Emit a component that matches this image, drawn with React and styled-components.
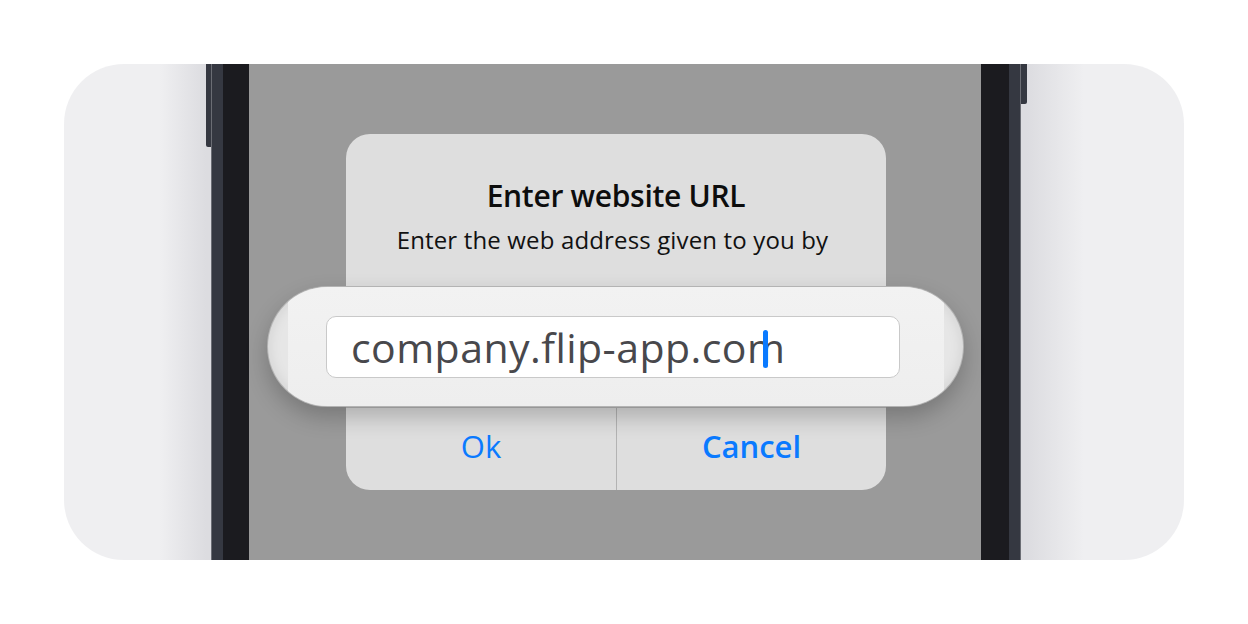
import React from 'react';
import styled, { createGlobalStyle } from 'styled-components';

const Global = createGlobalStyle`
  html, body { margin: 0; padding: 0; background: #ffffff; }
  body { font-family: "Open Sans", "Noto Sans", sans-serif; }
  * { box-sizing: border-box; }
`;

const Page = styled.div`
  width: 1248px;
  height: 624px;
  padding: 64px;
  background: #ffffff;
`;

const Card = styled.div`
  height: 496px;
  border-radius: 60px;
  overflow: hidden;
  display: flex;
  padding-left: 147px;
  background: linear-gradient(
    to right,
    #efeff1 0px,
    #efeff1 96px,
    #dcdce0 142px,
    #dcdce0 963px,
    #efeff1 1020px,
    #efeff1 100%
  );
`;

const PhoneShell = styled.div`
  position: relative;
  width: 810px;
  height: 100%;
  background: #353841;
  padding: 0 12px;
  display: flex;
  box-shadow: inset 1px 0 0 #6b6d74, inset -1px 0 0 #6b6d74;
`;

const SideButton = styled.div`
  position: absolute;
  top: 0;
  ${(p) => (p.$side === 'left' ? 'left: -5px;' : 'right: -6px;')}
  width: ${(p) => (p.$side === 'left' ? 5 : 6)}px;
  height: ${(p) => p.$h}px;
  background: #353841;
  border-radius: ${(p) => (p.$side === 'left' ? '0 0 0 2px' : '0 0 2px 0')};
`;

const Bezel = styled.div`
  flex: 1;
  display: flex;
  background: #1b1b1f;
  padding: 0 28px 0 26px;
`;

const Screen = styled.div`
  position: relative;
  flex: 1;
  background: #9a9a9a;
  display: flex;
  justify-content: center;
  align-items: flex-start;
  padding: 70px 0 0 2px;
`;

const Dialog = styled.div`
  width: 540px;
  height: 356px;
  background: #dedede;
  border-radius: 24px;
  overflow: hidden;
  display: flex;
  flex-direction: column;
`;

const DialogBody = styled.div`
  flex: 1;
  display: flex;
  flex-direction: column;
  align-items: center;
  padding-top: 44px;
`;

const Title = styled.div`
  font-size: 30px;
  line-height: 36px;
  font-weight: 600;
  color: #0d0d0d;
  letter-spacing: -0.3px;
`;

const Subtitle = styled.div`
  margin-top: 11px;
  margin-right: 7px;
  font-size: 24px;
  line-height: 30px;
  letter-spacing: 0.15px;
  color: #111111;
`;

const ButtonRow = styled.div`
  height: 83px;
  display: grid;
  grid-template-columns: 1fr 1fr;
  border-top: 1px solid #b8b8b8;
`;

const ActionButton = styled.button`
  border: none;
  background: transparent;
  padding: 0 0 7px;
  font-family: inherit;
  font-size: 31px;
  font-weight: ${(p) => (p.$bold ? 600 : 400)};
  color: #0a7aff;
  border-left: ${(p) => (p.$divider ? '1px solid #b3b3b3' : 'none')};
  cursor: pointer;
`;

const Loupe = styled.div`
  position: absolute;
  left: 18px;
  top: 222px;
  width: 697px;
  height: 121px;
  border-radius: 61px;
  border: 1px solid rgba(0, 0, 0, 0.22);
  overflow: hidden;
  display: flex;
  padding-left: 20px;
  background: #e6e6e6;
  box-shadow: 0 10px 22px rgba(0, 0, 0, 0.22), inset 0 0 14px rgba(0, 0, 0, 0.1);
`;

const MagView = styled.div`
  width: 656px;
  height: 100%;
  display: flex;
  align-items: center;
  padding-left: 38px;
  background: linear-gradient(to bottom, #f2f2f2, #eeeeee);
`;

const TextField = styled.div`
  width: 574px;
  height: 62px;
  background: #ffffff;
  border: 1px solid #c9c9c9;
  border-radius: 10px;
  display: flex;
  align-items: center;
  padding-left: 24px;
  font-size: 41px;
  letter-spacing: 0.45px;
  color: #48484c;
  white-space: nowrap;
`;

const CaretLetter = styled.span`
  position: relative;
`;

const Caret = styled.span`
  position: absolute;
  left: 50%;
  top: 50%;
  width: 5px;
  height: 38px;
  margin-left: -3px;
  margin-top: -17px;
  border-radius: 3px;
  background: #0a7aff;
`;

export default function App() {
  return (
    <>
      <Global />
      <Page>
        <Card>
          <PhoneShell>
            <SideButton $side="left" $h={83} />
            <SideButton $side="right" $h={40} />
            <Bezel>
              <Screen>
                <Dialog>
                  <DialogBody>
                    <Title>Enter website URL</Title>
                    <Subtitle>Enter the web address given to you by</Subtitle>
                  </DialogBody>
                  <ButtonRow>
                    <ActionButton>Ok</ActionButton>
                    <ActionButton $bold $divider>Cancel</ActionButton>
                  </ButtonRow>
                </Dialog>
                <Loupe>
                  <MagView>
                    <TextField>
                      company.flip-app.co
                      <CaretLetter>
                        m
                        <Caret />
                      </CaretLetter>
                    </TextField>
                  </MagView>
                </Loupe>
              </Screen>
            </Bezel>
          </PhoneShell>
        </Card>
      </Page>
    </>
  );
}
